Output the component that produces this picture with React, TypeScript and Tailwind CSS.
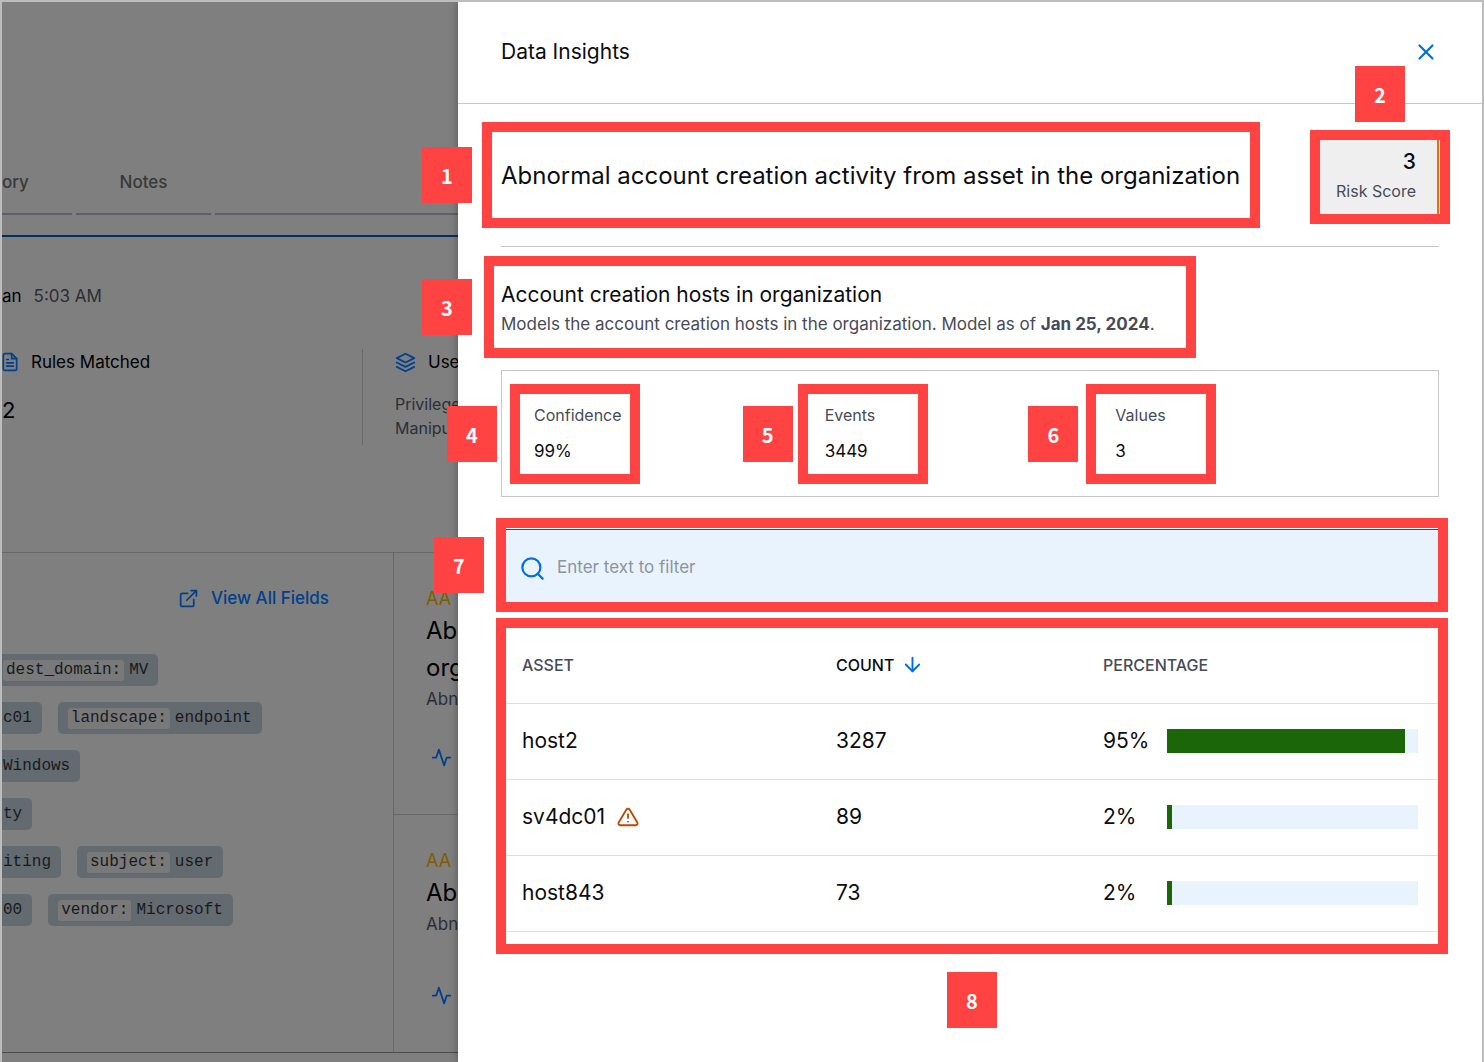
import React from 'react';
import {
  FiActivity,
  FiAlertTriangle,
  FiArrowDown,
  FiExternalLink,
  FiFileText,
  FiLayers,
  FiSearch,
  FiX,
} from 'react-icons/fi';

type Tag = { label?: string; value: string };

const tagRows: Tag[][] = [
  [{ label: 'dest_domain:', value: 'MV' }],
  [{ value: 'c01' }, { label: 'landscape:', value: 'endpoint' }],
  [{ value: 'Windows' }],
  [{ value: 'ty' }],
  [{ value: 'iting' }, { label: 'subject:', value: 'user' }],
  [{ value: '00' }, { label: 'vendor:', value: 'Microsoft' }],
];

const stats = [
  { n: 4, label: 'Confidence', value: '99%', frame: '-left-6', badge: '-left-[87px]' },
  { n: 5, label: 'Events', value: '3449', frame: '-left-[27px]', badge: '-left-[82px]' },
  { n: 6, label: 'Values', value: '3', frame: '-left-[29px]', badge: '-left-[87px]' },
];

const hosts = [
  { asset: 'host2', count: 3287, percent: 95 },
  { asset: 'sv4dc01', count: 89, percent: 2, warn: true },
  { asset: 'host843', count: 73, percent: 2 },
];

// Red outline plus its numbered marker
const Callout = ({ n, frame, badge }: { n: number; frame: string; badge: string }) => (
  <>
    <div className={`pointer-events-none absolute z-10 border-[10px] border-[#ff4343] ${frame}`} />
    <div
      className={`absolute z-10 flex h-14 w-[50px] items-center justify-center bg-[#ff4343] pt-0.5 font-['Noto_Sans_CJK_SC',sans-serif] text-xl font-bold text-white ${badge}`}
    >
      {n}
    </div>
  </>
);

const TagChip = ({ label, value }: Tag) => (
  <span className="flex h-8 items-center gap-[5px] rounded-[5px] bg-[#646b70] px-[10px]">
    {label && <span className="rounded-[3px] bg-[#797979] px-[3px] leading-[21px]">{label}</span>}
    <span>{value}</span>
  </span>
);

const DetectionCard = ({ title }: { title: string[] }) => (
  <article className="flex flex-col items-start pt-8 pl-8">
    <p className="text-lg leading-[27px] text-[#805c00]">AA</p>
    <h3 className="text-2xl leading-[37px] text-black">
      {title.map((line) => (
        <span key={line} className="block">{line}</span>
      ))}
    </h3>
    <p className="text-[17px] leading-[26px] text-[#2b2e37]">Abn</p>
    <button type="button" aria-label="View activity" className="mt-auto mb-[46px] ml-[5px] text-[#00408c]">
      <FiActivity size={21} />
    </button>
  </article>
);

const CasePage = () => (
  <main className="flex w-[456px] shrink-0 flex-col overflow-hidden whitespace-nowrap bg-[#7f7f7f] text-black">
    <nav className="flex gap-1 pt-[159px] text-[17px] font-medium text-[#393939]">
      <a href="#history" className="h-[54px] w-[70px] border-b-2 border-[#5d606b] leading-[42px]">ory</a>
      <a href="#notes" className="h-[54px] w-[135px] border-b-2 border-[#5d606b] text-center leading-[42px]">Notes</a>
      <div className="flex-1 border-b-2 border-[#5d606b]" />
    </nav>

    <section className="mt-5 h-[317px] border-t-2 border-[#002f66] pt-[46px]">
      <p className="flex gap-3 text-[17px] leading-[26px]">
        <span>an</span>
        <span className="text-[#2b2e37]">5:03 AM</span>
      </p>
      <div className="mt-10 flex h-24">
        <div className="w-[361px] shrink-0 border-r border-[#696969]">
          <h2 className="flex items-center gap-[11px] text-[17px] leading-[26px]">
            <FiFileText size={20} className="-ml-0.5 text-[#00408c]" />
            Rules Matched
          </h2>
          <p className="mt-5 text-[22px] leading-[30px]">2</p>
        </div>
        <div className="pl-8">
          <h2 className="flex items-center gap-3 text-[17px] leading-[26px]">
            <FiLayers size={21} className="text-[#00408c]" />
            Use
          </h2>
          <p className="mt-[17px] text-base leading-6 text-[#2b2e37]">
            Privilege
            <br />
            Manipu
          </p>
        </div>
      </div>
    </section>

    <section className="flex h-[501px] border-y border-t-[#686868] border-b-[#4c4c4c]">
      <div className="w-[392px] shrink-0 border-r border-[#686868] pt-8">
        <a
          href="#fields"
          className="flex items-center justify-end gap-3 pr-16 text-[17px] leading-[26px] font-medium text-[#00408c]"
        >
          <FiExternalLink size={21} />
          View All Fields
        </a>
        <div className="mt-[43px] -ml-[9px] flex flex-col gap-4 font-['Liberation_Mono',monospace] text-base text-[#18191d]">
          {tagRows.map((row, i) => (
            <div key={i} className="flex gap-4">
              {row.map((tag) => (
                <TagChip key={tag.value} {...tag} />
              ))}
            </div>
          ))}
        </div>
      </div>
      <div className="grid flex-1 grid-rows-[262px_1fr] divide-y divide-[#686868]">
        <DetectionCard title={['Ab', 'org']} />
        <DetectionCard title={['Ab']} />
      </div>
    </section>
  </main>
);

const InsightsPanel = () => (
  <aside className="relative min-w-0 flex-1 bg-white text-[#0c0d11] shadow-[0_0_8px_rgba(0,0,0,0.35)]">
    <header className="flex h-[102px] items-center justify-between border-b border-[#c8c8c8] px-[43px] pb-px">
      <h2 className="text-[21px]">Data Insights</h2>
      <button type="button" aria-label="Close" className="text-[#006fe0]">
        <FiX size={26} />
      </button>
    </header>

    <div className="px-[43px]">
      <section className="relative flex h-[143px] items-center justify-between border-b border-[#c8c8c8] pt-0.5">
        <h1 className="text-2xl whitespace-nowrap">
          Abnormal account creation activity from asset in the organization
        </h1>
        <div className="flex h-[82px] w-[124px] flex-col justify-center border-r-2 border-[#f56a00] bg-[#efefef] pt-0.5 pr-[21px] text-right">
          <span className="text-[21px] leading-7 font-medium">3</span>
          <span className="text-base leading-[30px] text-[#474b58]">Risk Score</span>
        </div>
        <Callout n={1} frame="-left-[19px] top-[18px] h-[106px] w-[778px]" badge="-left-[79px] top-[43px]" />
        <Callout n={2} frame="-right-[11px] top-[26px] h-[94px] w-[140px]" badge="right-[34px] -top-[38px]" />
      </section>

      <section className="relative h-[123px] pt-8">
        <h2 className="text-[21px] leading-8">Account creation hosts in organization</h2>
        <p className="text-[17px] leading-[26px] text-[#474b58]">
          Models the account creation hosts in the organization. Model as of <strong>Jan 25, 2024</strong>.
        </p>
        <Callout n={3} frame="-left-[17px] top-[9px] h-[102px] w-[712px]" badge="-left-[79px] top-8" />
      </section>

      <dl className="grid h-[127px] grid-cols-3 border border-[#c8c8c8] px-8 pt-[31px]">
        {stats.map(({ n, label, value, frame, badge }) => (
          <div key={label} className="relative">
            <dt className="text-base leading-[26px] text-[#474b58]">{label}</dt>
            <dd className="mt-[10px] text-[17px] leading-[26px]">{value}</dd>
            <Callout n={n} frame={`-top-[18px] h-[100px] w-[130px] ${frame}`} badge={`top-1 ${badge}`} />
          </div>
        ))}
      </dl>

      <div className="relative mt-8">
        <label className="flex h-[77px] items-center gap-[11px] border-t border-[#0a56a4] bg-[#e8f3fd] px-[18px]">
          <FiSearch size={27} className="shrink-0 text-[#006fe0]" />
          <input
            type="text"
            aria-label="Filter"
            placeholder="Enter text to filter"
            className="w-full bg-transparent text-[17px] outline-none placeholder:text-[#8e939e]"
          />
        </label>
        <Callout n={7} frame="-left-[5px] -right-[9px] -top-[11px] h-[94px]" badge="-left-[67px] top-2" />
      </div>

      <div className="relative mt-[21px]">
        <table className="w-full table-fixed text-left">
          <thead>
            <tr className="h-[76px] border-b border-[#dedede] text-base text-[#474b58]">
              <th className="w-[314px] pl-[21px] font-medium">ASSET</th>
              <th className="w-[267px] pl-[21px] font-medium text-[#0c0d11]">
                <button type="button" className="flex items-center gap-[7px]">
                  COUNT
                  <FiArrowDown size={23} className="text-[#006fe0]" />
                </button>
              </th>
              <th className="pl-[21px] font-medium">PERCENTAGE</th>
            </tr>
          </thead>
          <tbody>
            {hosts.map(({ asset, count, percent, warn }) => (
              <tr key={asset} className="h-[76px] border-b border-[#dedede] text-[21px]">
                <td className="pl-[21px]">
                  <span className="flex items-center gap-3">
                    {asset}
                    {warn && <FiAlertTriangle size={22} className="text-[#bf4600]" />}
                  </span>
                </td>
                <td className="pl-[21px]">{count}</td>
                <td className="pr-[21px] pl-[21px]">
                  <div className="flex items-center">
                    <span className="w-16 shrink-0">{percent}%</span>
                    <div className="h-6 flex-1 bg-[#e8f3fd]">
                      <div className="h-6 bg-[#1a6608]" style={{ width: `${percent}%` }} />
                    </div>
                  </div>
                </td>
              </tr>
            ))}
          </tbody>
        </table>
        <Callout n={8} frame="-left-[5px] -right-[9px] -top-[9px] h-[336px]" badge="left-[446px] top-[345px]" />
      </div>
    </div>
  </aside>
);

const App = () => {
  return (
    <div className="flex min-h-screen overflow-hidden border-2 border-b-0 border-[#bdbdbd] font-['Inter',sans-serif]">
      <CasePage />
      <InsightsPanel />
    </div>
  );
};

export default App;
